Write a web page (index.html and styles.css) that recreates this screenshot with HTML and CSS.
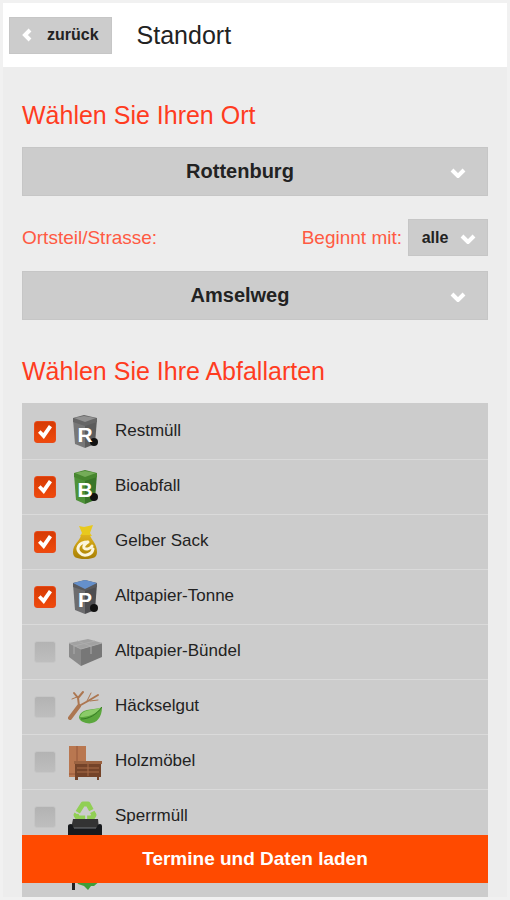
FILE: index.html
```html
<!DOCTYPE html>
<html lang="de">
<head>
    <meta charset="UTF-8">
    <meta name="viewport" content="width=device-width, initial-scale=1.0">
    <title>Standort</title>
    <link rel="stylesheet" href="styles.css">
</head>
<body>
    <div class="screen">
        <header class="header">
            <button class="back-button" type="button">
                <svg class="back-arrow" viewBox="0 0 10 14"><path d="M8 2L3 7L8 12"/></svg>
                zurück
            </button>
            <h1>Standort</h1>
        </header>

        <main class="content">
            <!-- Location -->
            <h2><label for="ort">Wählen Sie Ihren Ort</label></h2>
            <div class="select">
                <select id="ort"><option>Rottenburg</option></select>
                <svg class="arrow" viewBox="0 0 16 10"><path d="M2 2L8 8L14 2"/></svg>
            </div>

            <div class="filter">
                <label for="strasse">Ortsteil/Strasse:</label>
                <label class="filter-start" for="beginnt">Beginnt mit:</label>
                <div class="select select-small">
                    <select id="beginnt"><option>alle</option></select>
                    <svg class="arrow" viewBox="0 0 16 10"><path d="M2 2L8 8L14 2"/></svg>
                </div>
            </div>

            <div class="select">
                <select id="strasse"><option>Amselweg</option></select>
                <svg class="arrow" viewBox="0 0 16 10"><path d="M2 2L8 8L14 2"/></svg>
            </div>

            <!-- Waste types -->
            <h2 class="types-title">Wählen Sie Ihre Abfallarten</h2>
            <div class="types">
                <label class="type">
                    <input type="checkbox" checked>
                    <svg class="icon" viewBox="0 0 34 36">
                        <path fill="#777" d="M5 5L17 9V34L7 30Z"/>
                        <path fill="#5c5c5c" d="M17 9L29 5L27 30L17 34Z"/>
                        <path fill="#666" d="M5 4L16 1L29 4V8L17 12L5 8Z"/>
                        <path fill="#929292" d="M6 4L16 2L28 4L17 8Z"/>
                        <circle cx="26" cy="28" r="4" fill="#111"/>
                        <text class="letter" x="17" y="28">R</text>
                    </svg>
                    <span>Restmüll</span>
                </label>
                <label class="type">
                    <input type="checkbox" checked>
                    <svg class="icon" viewBox="0 0 34 36">
                        <path fill="#4d9138" d="M6 5L17 9V35L8 31Z"/>
                        <path fill="#397528" d="M17 9L29 5L27 31L17 35Z"/>
                        <path fill="#47862f" d="M6 4L17 1L29 4V8L17 12L6 8Z"/>
                        <path fill="#74ac58" d="M7 4L17 2L28 4L17 8Z"/>
                        <circle cx="26" cy="28" r="4" fill="#111"/>
                        <text class="letter" x="17" y="28">B</text>
                    </svg>
                    <span>Bioabfall</span>
                </label>
                <label class="type">
                    <input type="checkbox" checked>
                    <svg class="icon" viewBox="0 0 34 36">
                        <defs>
                            <linearGradient id="sack" x1="0" y1="0" x2="0" y2="1">
                                <stop offset="0" stop-color="#dfb21c"/>
                                <stop offset="1" stop-color="#a87f04"/>
                            </linearGradient>
                        </defs>
                        <path fill="#e8c91d" d="M11 2L16 3L25 1L22 9L24 12H12L14 9Z"/>
                        <path fill="url(#sack)" d="M13 11H22C23 16 29 19 29 28C29 33 26 35 17 35C8 35 5 33 5 28C5 20 12 17 13 11Z"/>
                        <path fill="none" stroke="#fbf5dc" stroke-width="3" stroke-linecap="round" d="M20 18C10 18 8 25 12 29C16 33 24 31 25 25M20 18C17 20 15 22 16 24C18 26 22 25 24 22"/>
                    </svg>
                    <span>Gelber Sack</span>
                </label>
                <label class="type">
                    <input type="checkbox" checked>
                    <svg class="icon" viewBox="0 0 34 36">
                        <path fill="#6c6c6e" d="M5 5L17 9V35L7 31Z"/>
                        <path fill="#4d4d50" d="M17 9L29 5L27 31L17 35Z"/>
                        <path fill="#59595c" d="M5 4L17 1L29 4V8L17 12L5 8Z"/>
                        <path fill="#6590cc" d="M5 4L17 1L29 4L17 10Z"/>
                        <circle cx="26" cy="29" r="4" fill="#111"/>
                        <text class="letter" x="17" y="28">P</text>
                    </svg>
                    <span>Altpapier-Tonne</span>
                </label>
                <label class="type">
                    <input type="checkbox">
                    <svg class="icon" viewBox="0 0 34 36">
                        <path fill="#a2a2a2" d="M1 9L20 5L34 9L13 16Z"/>
                        <path fill="#8a8a8a" d="M1 9L13 15V32L1 23Z"/>
                        <path fill="#777" d="M13 15L34 9V23L13 32Z"/>
                        <path fill="none" stroke="#acacac" d="M1 9L13 15L34 9M9 7L23 12V20M27 7L6 12V20"/>
                    </svg>
                    <span>Altpapier-Bündel</span>
                </label>
                <label class="type">
                    <input type="checkbox">
                    <svg class="icon" viewBox="0 0 34 36">
                        <g fill="none" stroke="#ac7650" stroke-linecap="round">
                            <path stroke-width="4" d="M2 29L11 17"/>
                            <path stroke-width="2" d="M11 17L20 12L30 6M11 17L10 9L6 4M10 9L15 3"/>
                            <path d="M19 12L23 4M22 12L30 11M9 8L4 10"/>
                        </g>
                        <path fill="#5ba73d" d="M34 18C34 30 27 36 18 34C14 33 11 31 11 28C14 18 26 22 34 18Z"/>
                        <path fill="#8bcb69" d="M34 18C26 22 15 19 12 28C20 28 27 26 34 18Z"/>
                        <path fill="none" stroke="#357b24" d="M13 30C21 30 28 26 34 18"/>
                    </svg>
                    <span>Häckselgut</span>
                </label>
                <label class="type">
                    <input type="checkbox">
                    <svg class="icon" viewBox="0 0 34 36">
                        <path fill="#b97750" d="M1 2H18V33H1Z"/>
                        <path fill="none" stroke="#96583a" d="M9 2V33M1 30H18"/>
                        <path fill="#744329" d="M7 18H33V33H31V36H29V33H10V36H7Z"/>
                        <path fill="#9b6240" d="M6 17H34V20H6Z"/>
                        <path fill="none" stroke="#a86d49" d="M9 24H31M9 28H31M20 20V32"/>
                    </svg>
                    <span>Holzmöbel</span>
                </label>
                <label class="type">
                    <input type="checkbox">
                    <svg class="icon" viewBox="0 0 34 36">
                        <path fill="none" stroke="#91cf54" stroke-width="5" stroke-dasharray="12 2" stroke-linejoin="round" d="M15 5H20L26 16L24 19H10L8 16Z"/>
                        <path fill="#333" d="M5 20H30L31 30H3Z"/>
                        <path fill="#17191c" d="M0 27Q0 25 3 25Q5 25 5 29H29Q29 25 32 25Q34 25 34 27V36H0Z"/>
                        <path stroke="#72767a" d="M6 29H28"/>
                    </svg>
                    <span>Sperrmüll</span>
                </label>
                <label class="type">
                    <input type="checkbox" checked>
                    <svg class="icon" viewBox="0 0 34 36">
                        <path fill="#222" d="M4 4H7V36H4Z"/>
                        <path fill="#3f9d38" d="M19 4L33 26L26 32H23L20 36L16 32L10 30L8 26Z"/>
                    </svg>
                </label>
            </div>
        </main>

        <button class="load-button" type="button">Termine und Daten laden</button>
    </div>
</body>
</html>
```

FILE: styles.css
```css
/* General Styling */
* {
    box-sizing: border-box;
}

body {
    margin: 0;
    font-family: "Liberation Sans", Arial, sans-serif;
    color: #222;
}

.screen {
    position: relative;
    display: flex;
    flex-direction: column;
    height: 100vh;
    border: 3px solid #f1f1f1;
    background: #ededed;
}

/* Header */
.header {
    display: flex;
    flex: none;
    align-items: center;
    gap: 25px;
    height: 64px;
    padding: 0 6px;
    background: white;
}

h1 {
    margin: 0;
    font-size: 25px;
    font-weight: normal;
}

button,
select {
    font-family: inherit;
    font-weight: bold;
    color: #222;
    border: none;
    border-radius: 0;
    cursor: pointer;
}

.back-button {
    display: flex;
    align-items: center;
    gap: 15px;
    height: 37px;
    padding: 0 12px;
    font-size: 16px;
    background: #ccc;
    border: 1px solid #c6c6c6;
}

.back-arrow,
.arrow {
    fill: none;
    stroke: white;
    stroke-width: 4;
}

.back-arrow {
    width: 10px;
    height: 14px;
}

/* Content */
.content {
    flex: 1;
    padding: 0 19px;
    overflow-y: auto;
    scrollbar-width: none;
}

h2 {
    margin: 33px 0 17px;
    font-size: 25px;
    font-weight: normal;
    line-height: 30px;
    color: #ff3c1f;
}

.types-title {
    margin-top: 36px;
}

.select {
    position: relative;
}

select {
    display: block;
    width: 100%;
    height: 49px;
    padding: 0 30px 2px 0;
    font-size: 20px;
    text-align-last: center;
    background: #ccc;
    border: 1px solid #c6c6c6;
    appearance: none;
}

.arrow {
    position: absolute;
    top: 50%;
    right: 22px;
    width: 16px;
    height: 10px;
    margin-top: -4px;
    pointer-events: none;
}

.filter {
    display: flex;
    align-items: center;
    gap: 6px;
    margin: 23px 0 15px;
    font-size: 19px;
    color: #ff5a43;
}

.filter-start {
    margin-left: auto;
}

.select-small {
    width: 80px;
}

.select-small select {
    height: 37px;
    padding: 0 26px 0 0;
    font-size: 16px;
}

.select-small .arrow {
    right: 12px;
}

/* Waste types */
.types {
    padding-top: 2px;
    background: #ccc;
}

.type {
    display: flex;
    align-items: center;
    gap: 12px;
    height: 55px;
    padding-left: 12px;
    font-size: 17px;
    border-bottom: 1px solid #dadada;
    cursor: pointer;
}

.type span {
    padding: 0 0 2px 1px;
}

.type input {
    width: 22px;
    height: 22px;
    margin: 0;
    border: 1px solid #c6c6c6;
    border-radius: 3px;
    background: linear-gradient(to bottom, #b3b3b3, #bebebe);
    appearance: none;
}

.type input:checked {
    border-color: #e84a18;
    background: linear-gradient(to bottom, #d63b05, #ef4a0c);
}

.type input:checked::before {
    content: "";
    display: block;
    width: 14px;
    height: 14px;
    margin: 3px;
    background: white;
    clip-path: polygon(0 55%, 18% 38%, 38% 58%, 78% 0, 100% 16%, 42% 100%);
}

.icon {
    width: 34px;
    height: 36px;
}

.letter {
    font-size: 21px;
    font-weight: bold;
    fill: white;
    text-anchor: middle;
}

.load-button {
    position: absolute;
    right: 19px;
    bottom: 14px;
    left: 19px;
    height: 48px;
    font-size: 19px;
    color: white;
    background: #ff4a00;
}
```
